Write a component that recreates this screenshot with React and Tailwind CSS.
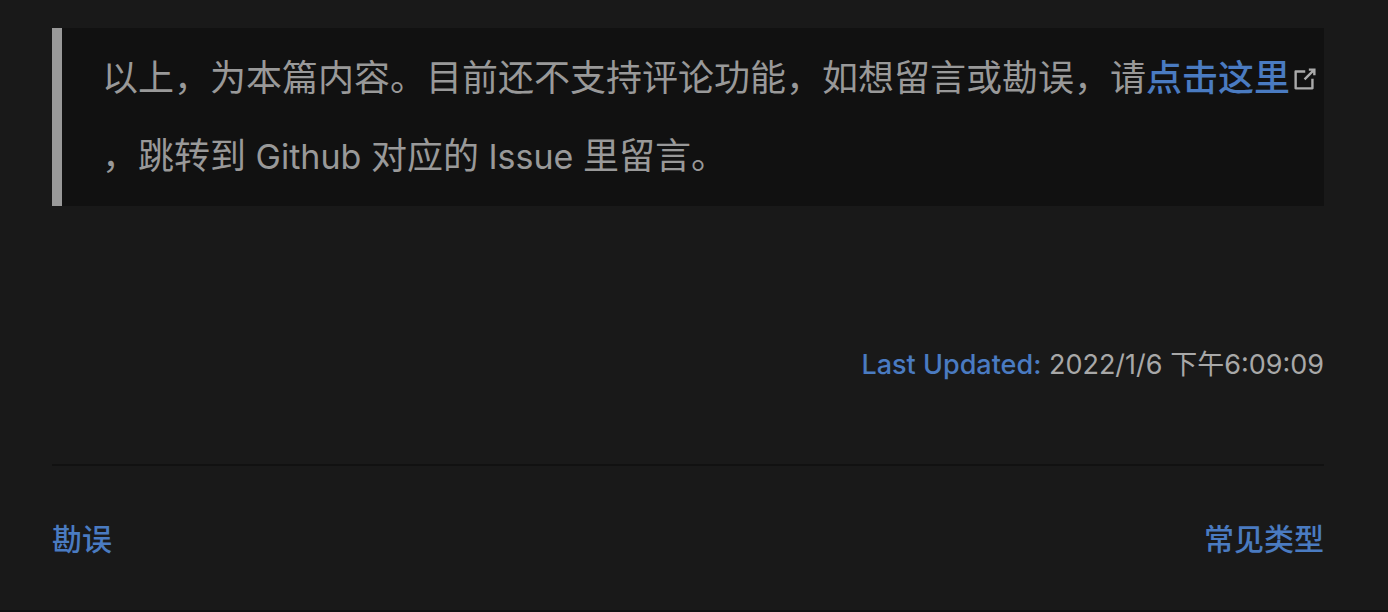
export default function App() {
  return (
    <main className="min-h-screen border-b-2 border-[#121212] bg-[#191919] pt-7 pr-16 pl-[52px] font-['Inter','Noto_Sans_CJK_SC',sans-serif] text-[#a8a8a8]">
      <blockquote className="border-l-10 border-[#999] bg-[#111] py-[11px] pl-10 text-4xl leading-[78px] text-[#999]">
        <p>
          以上，为本篇内容。目前还不支持评论功能，如想留言或勘误，请
          <a href="#issues" className="font-medium text-[#4a7bc1]">
            点击这里
            <svg viewBox="0 0 100 100" className="mb-1 inline-block size-[30px] text-[#aaa]" fill="currentColor" aria-hidden="true">
              <path d="M18.8 85.1h56c2.2 0 4-1.8 4-4v-32h-8v28h-48v-48h28v-8h-32c-2.2 0-4 1.8-4 4v56c0 2.2 1.8 4 4 4z" />
              <path d="M45.7 48.7 51.3 54.3 77.2 28.5V37.2h8V14.9H62.8v8h8.7z" />
            </svg>
          </a>
          ，跳转到<span className="text-[34px] leading-none"> Github </span>对应的<span className="text-[34px] leading-none"> Issue </span>里留言。
        </p>
      </blockquote>
      <div className="mt-[137px] text-right text-[27px] leading-11">
        <span className="font-medium text-[#4a7bc1]">Last Updated:</span> <time>2022/1/6 下午6:09:09</time>
      </div>
      <nav className="mt-[77px] flex justify-between border-t-2 border-[#111] pt-[49px] text-[30px] leading-12 font-medium text-[#4a7bc1]">
        <a href="#errata">勘误</a>
        <a href="#types">常见类型</a>
      </nav>
    </main>
  );
}
